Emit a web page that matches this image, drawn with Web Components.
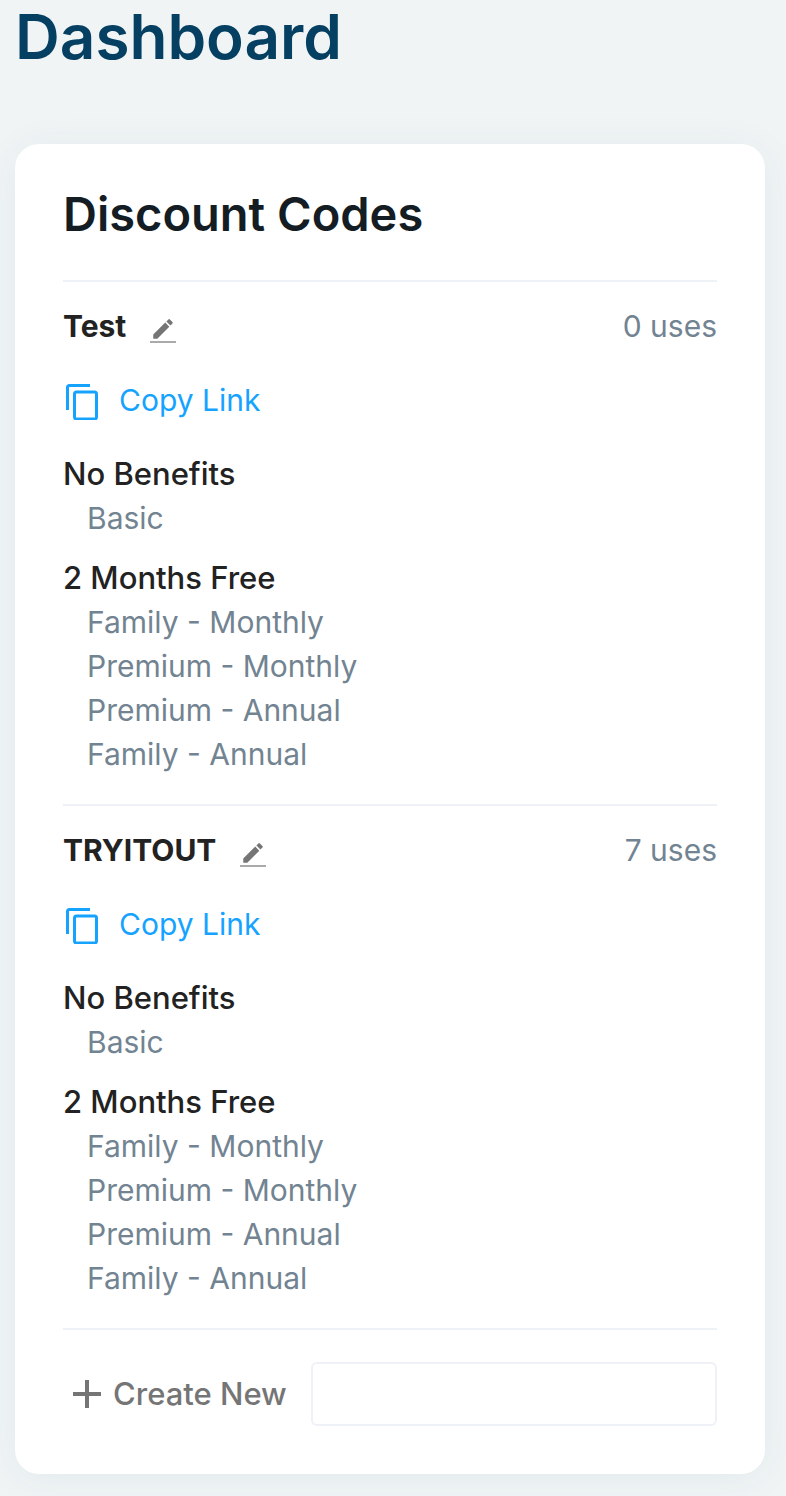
<!DOCTYPE html>
<html lang="en">
<head>
<meta charset="utf-8">
<meta name="viewport" content="width=device-width, initial-scale=1">
<title>Dashboard</title>
<style>
  body {
    margin: 0;
    background: #f0f4f5;
    font-family: Inter, "Liberation Sans", sans-serif;
    font-size: 30px;
    line-height: 44px;
    color: #222;
  }
</style>
</head>
<body>
<dashboard-page heading="Dashboard">
  <discount-card heading="Discount Codes">
    <discount-code name="Test" uses="0">
      <benefit-group heading="No Benefits" plans="Basic"></benefit-group>
      <benefit-group heading="2 Months Free" plans="Family - Monthly|Premium - Monthly|Premium - Annual|Family - Annual"></benefit-group>
    </discount-code>
    <discount-code name="TRYITOUT" uses="7">
      <benefit-group heading="No Benefits" plans="Basic"></benefit-group>
      <benefit-group heading="2 Months Free" plans="Family - Monthly|Premium - Monthly|Premium - Annual|Family - Annual"></benefit-group>
    </discount-code>
    <create-code></create-code>
  </discount-card>
</dashboard-page>

<script>
  class BaseElement extends HTMLElement {
    constructor() {
      super();
      this.attachShadow({ mode: "open" });
    }
    connectedCallback() {
      this.shadowRoot.innerHTML = this.render();
    }
    attr(name) {
      return this.getAttribute(name) || "";
    }
  }

  customElements.define("dashboard-page", class extends BaseElement {
    render() {
      return `
        <style>
          :host { display: block; padding: 0 21px 22px 15px; }
          h1 { margin: 0 0 70px; font-size: 62px; line-height: 74px; font-weight: 600; color: #053f62; }
        </style>
        <h1>${this.attr("heading")}</h1>
        <main><slot></slot></main>`;
    }
  });

  customElements.define("discount-card", class extends BaseElement {
    render() {
      return `
        <style>
          :host {
            display: block;
            padding: 48px;
            border-radius: 24px;
            background: #fff;
            box-shadow: 0 4px 40px rgba(5, 63, 98, .06);
          }
          h2 { margin: 0 0 44px; font-size: 47px; line-height: 44px; font-weight: 600; color: #141c24; }
        </style>
        <h2>${this.attr("heading")}</h2>
        <slot></slot>`;
    }
  });

  customElements.define("discount-code", class extends BaseElement {
    render() {
      return `
        <style>
          :host { display: block; padding: 22px 0 28px; border-top: 2px solid #eef2f6; }
          header { display: flex; align-items: center; gap: 24px; }
          h3 { margin: 0; font-size: 30px; font-weight: 700; }
          button { margin: 0; padding: 0; border: 0; background: none; font: inherit; cursor: pointer; }
          .edit { display: flex; justify-content: center; width: 26px; height: 26px; margin-top: 8px; border-bottom: 2px solid #aaa; color: #757575; }
          .uses { margin-left: auto; color: #728391; }
          .copy { display: flex; align-items: center; gap: 16px; margin: 30px 0; color: #16a3ff; }
          .groups { display: grid; gap: 16px; }
        </style>
        <header>
          <h3>${this.attr("name")}</h3>
          <button class="edit" type="button" aria-label="Edit ${this.attr("name")}">
            <svg width="26" height="26" viewBox="0 1 24 24" fill="currentColor" aria-hidden="true">
              <path d="M3 17.25V21h3.75L17.81 9.94l-3.75-3.75L3 17.25zM20.71 7.04a1 1 0 0 0 0-1.41l-2.34-2.34a1 1 0 0 0-1.41 0l-1.83 1.83 3.75 3.75 1.83-1.83z"/>
            </svg>
          </button>
          <span class="uses">${this.attr("uses")} uses</span>
        </header>
        <button class="copy" type="button">
          <svg width="40" height="40" viewBox="0 0 40 40" fill="none" stroke="currentColor" stroke-width="3" aria-hidden="true">
            <path d="M4.5 30V7.5a2 2 0 0 1 2-2H27"/>
            <rect x="11.5" y="12" width="22" height="27" rx="2"/>
          </svg>
          <span>Copy Link</span>
        </button>
        <div class="groups"><slot></slot></div>`;
    }
  });

  customElements.define("benefit-group", class extends BaseElement {
    render() {
      const items = this.attr("plans").split("|").map(plan => `<li>${plan}</li>`).join("");
      return `
        <style>
          :host { display: block; }
          h4 { margin: 0; font-size: 31px; font-weight: 500; }
          ul { margin: 0; padding: 0 0 0 24px; list-style: none; color: #728391; }
        </style>
        <h4>${this.attr("heading")}</h4>
        <ul>${items}</ul>`;
    }
  });

  customElements.define("create-code", class extends BaseElement {
    render() {
      return `
        <style>
          :host { display: flex; align-items: center; gap: 24px; padding-top: 32px; border-top: 2px solid #eef2f6; }
          label { display: flex; align-items: center; gap: 12px; padding-left: 10px; white-space: nowrap; font-size: 31px; font-weight: 500; color: #757575; }
          input {
            flex: 1;
            min-width: 0;
            box-sizing: border-box;
            height: 64px;
            padding: 0 16px;
            border: 2px solid #eef2f6;
            border-radius: 6px;
            background: #fff;
            font: inherit;
            color: inherit;
          }
        </style>
        <label for="code">
          <svg width="28" height="28" viewBox="0 0 28 28" stroke="currentColor" stroke-width="4" aria-hidden="true">
            <path d="M14 0V28M0 14H28"/>
          </svg>
          <span>Create New</span>
        </label>
        <input id="code" type="text">`;
    }
  });
</script>
</body>
</html>
